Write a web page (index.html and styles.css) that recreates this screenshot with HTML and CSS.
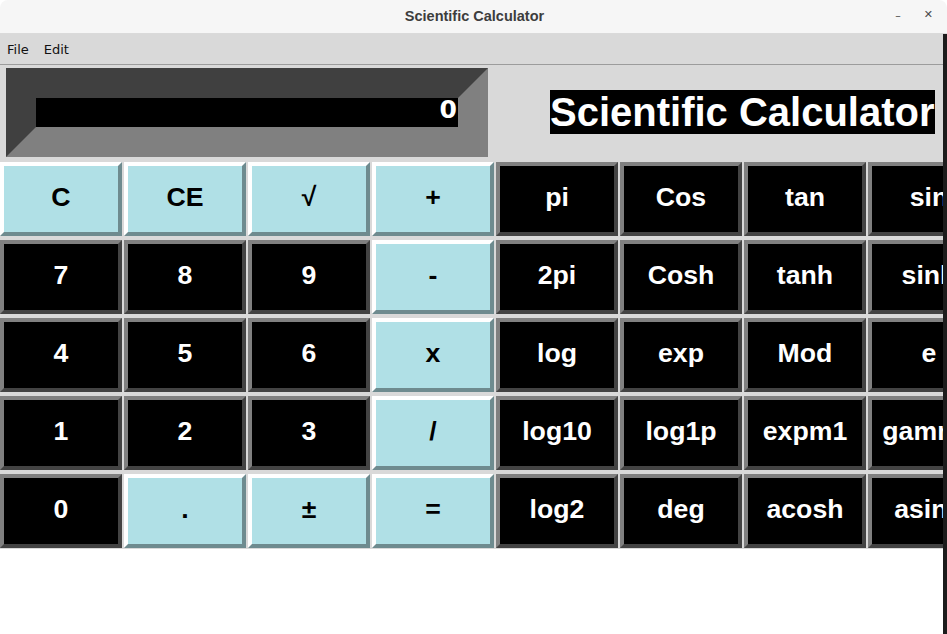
FILE: index.html
```html
<!DOCTYPE html>
<html>
<head>
<meta charset="utf-8">
<title>Scientific Calculator</title>
<link rel="stylesheet" href="styles.css">
</head>
<body>
<div class="window">
  <div class="titlebar">
    <div class="title">Scientific Calculator</div>
    <div class="controls">
      <span class="ctl min">&#8211;</span>
      <span class="ctl close">&#10005;</span>
    </div>
  </div>
  <div class="app">
    <div class="main">
      <div class="menubar">
        <span class="menu">File</span>
        <span class="menu">Edit</span>
      </div>
      <div class="content">
        <div class="top">
          <div class="display"><div class="screen">0</div></div>
          <div class="heading">Scientific Calculator</div>
        </div>
        <div class="keypad">
          <div class="key light">C</div>
          <div class="key light">CE</div>
          <div class="key light">√</div>
          <div class="key light">+</div>
          <div class="key dark">pi</div>
          <div class="key dark">Cos</div>
          <div class="key dark">tan</div>
          <div class="key dark">sin</div>

          <div class="key dark">7</div>
          <div class="key dark">8</div>
          <div class="key dark">9</div>
          <div class="key light">-</div>
          <div class="key dark">2pi</div>
          <div class="key dark">Cosh</div>
          <div class="key dark">tanh</div>
          <div class="key dark">sinh</div>

          <div class="key dark">4</div>
          <div class="key dark">5</div>
          <div class="key dark">6</div>
          <div class="key light">x</div>
          <div class="key dark">log</div>
          <div class="key dark">exp</div>
          <div class="key dark">Mod</div>
          <div class="key dark">e</div>

          <div class="key dark">1</div>
          <div class="key dark">2</div>
          <div class="key dark">3</div>
          <div class="key light">/</div>
          <div class="key dark">log10</div>
          <div class="key dark">log1p</div>
          <div class="key dark">expm1</div>
          <div class="key dark">gamma</div>

          <div class="key dark">0</div>
          <div class="key light">.</div>
          <div class="key light">±</div>
          <div class="key light">=</div>
          <div class="key dark">log2</div>
          <div class="key dark">deg</div>
          <div class="key dark">acosh</div>
          <div class="key dark">asinh</div>
        </div>
      </div>
    </div>
    <div class="strip"></div>
  </div>
</div>
</body>
</html>
```
FILE: styles.css
```css
html, body {
  margin: 0;
  padding: 0;
  background: #ffffff;
}
body {
  width: 947px;
  height: 634px;
  overflow: hidden;
}
.window {
  display: flex;
  flex-direction: column;
  width: 947px;
  height: 634px;
}
.titlebar {
  position: relative;
  height: 33px;
  flex: 0 0 33px;
  background: #f6f6f6;
  border-bottom: 1px solid #dadada;
  border-radius: 8px 8px 0 0;
  display: flex;
  align-items: center;
  justify-content: center;
}
.title {
  font-family: "Liberation Sans", sans-serif;
  font-weight: bold;
  font-size: 14.5px;
  color: #3d3d3d;
  margin-left: 2px;
  margin-top: -2px;
}
.controls {
  position: absolute;
  right: 14px;
  top: 6px;
  display: flex;
  gap: 23px;
  font-family: "DejaVu Sans", sans-serif;
  color: #4a4a4a;
}
.ctl.min { font-size: 11px; line-height: 20px; }
.ctl.close { font-size: 11px; line-height: 18px; }
.app {
  flex: 1;
  display: flex;
  min-height: 0;
}
.main {
  width: 943px;
  overflow: hidden;
  display: flex;
  flex-direction: column;
}
.strip {
  width: 4px;
  background: #1c1c1c;
}
.menubar {
  height: 30px;
  flex: 0 0 30px;
  background: #d9d9d9;
  border-bottom: 1px solid #9c9c9c;
  display: flex;
  align-items: center;
  gap: 15px;
  padding-left: 7px;
  font-family: "DejaVu Sans", sans-serif;
  font-size: 13px;
  color: #111;
}
.content {
  background: #d9d9d9;
  padding: 3px 0 1px 0;
  align-self: flex-start;
  width: 943px;
}
.top {
  display: flex;
  align-items: center;
}
.display {
  margin-left: 6px;
  width: 422px;
  height: 29px;
  border-style: solid;
  border-width: 30px;
  border-color: #404040 #808080 #808080 #404040;
}
.screen {
  background: #000;
  height: 29px;
  color: #fff;
  font-family: "DejaVu Sans", sans-serif;
  font-weight: bold;
  font-size: 25px;
  line-height: 24px;
  text-align: right;
  padding-right: 1px;
}
.heading {
  margin-left: 62px;
  margin-top: -1px;
  background: #000;
  color: #fff;
  font-family: "Liberation Sans", sans-serif;
  font-weight: bold;
  font-size: 40px;
  line-height: 44px;
  white-space: nowrap;
}
.keypad {
  margin-top: 5px;
  display: grid;
  grid-template-columns: repeat(8, 122px);
  grid-auto-rows: 74px;
  column-gap: 2px;
  row-gap: 4px;
  width: 990px;
}
.key {
  box-sizing: border-box;
  border-style: solid;
  border-width: 4px;
  display: flex;
  align-items: center;
  justify-content: center;
  padding-bottom: 4px;
  font-family: "Liberation Sans", sans-serif;
  font-weight: bold;
  font-size: 26.67px;
  white-space: nowrap;
  overflow: hidden;
}
.key.light {
  background: #b0e0e6;
  color: #000;
  border-color: #ffffff #6e8b8f #6e8b8f #ffffff;
}
.key.dark {
  background: #000;
  color: #fff;
  border-color: #808080 #434343 #434343 #808080;
}
```
